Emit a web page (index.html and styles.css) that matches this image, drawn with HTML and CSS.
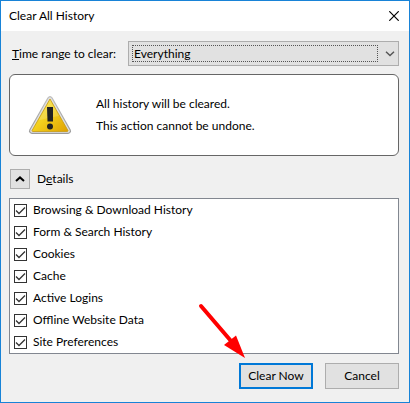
FILE: index.html
```html
<!DOCTYPE html>
<html lang="en">
  <head>
    <meta charset="UTF-8" />
    <meta name="viewport" content="width=device-width, initial-scale=1.0" />
    <title>Clear All History</title>
    <link rel="stylesheet" href="styles.css">
  </head>

  <body>
    <div class="dialog">
      <header class="titlebar">
        <h1>Clear All History</h1>
        <button type="button" class="close" aria-label="Close">
          <svg width="10" height="10" viewBox="0 0 10 10">
            <path d="M0.3 0.3L9.7 9.7M9.7 0.3L0.3 9.7" stroke="#000" stroke-width="1.2" />
          </svg>
        </button>
      </header>

      <main>
        <div class="range">
          <label for="range"><u>T</u>ime range to clear:</label>
          <div class="dropdown">
            <select id="range">
              <option>Everything</option>
            </select>
            <svg class="chevron" width="10" height="6" viewBox="0 0 10 6">
              <path d="M1 0.8L5 4.6L9 0.8" fill="none" stroke="#555" stroke-width="1.4" />
            </svg>
          </div>
        </div>

        <section class="warning">
          <svg class="warning-icon" width="44" height="40" viewBox="0 0 44 40">
            <defs>
              <linearGradient id="yellow" x1="0" y1="0" x2="1" y2="1">
                <stop offset="0" stop-color="#fbe94a" />
                <stop offset="0.5" stop-color="#f3cf1c" />
                <stop offset="1" stop-color="#dfa000" />
              </linearGradient>
              <linearGradient id="rim" x1="0" y1="0" x2="0" y2="1">
                <stop offset="0" stop-color="#bcbcbc" />
                <stop offset="1" stop-color="#9a9a9a" />
              </linearGradient>
            </defs>
            <path d="M19.4 2.8Q22 -0.6 24.6 2.8L42.6 34.5Q44 38.4 40.2 39H3.8Q0 38.4 1.4 34.5Z" fill="url(#rim)" />
            <path d="M20.2 3.5Q22 1 23.8 3.5L41.6 34.9Q42.4 37.2 40 37.8H4Q1.6 37.2 2.4 34.9Z" fill="#e0e0e0" />
            <path d="M22 4L40 35.6Q40 36.5 39.2 36.5H4.8Q4 36.5 4 35.6Z" fill="url(#yellow)" stroke="#c79a12" stroke-width="0.8" stroke-linejoin="round" />
            <path d="M22 5L31 21Q21 22 10.5 25.5Z" fill="#fff" opacity="0.16" />
            <path d="M19 12H25V26.500H19.500Z" fill="#222" />
            <circle cx="22" cy="31.500" r="3" fill="#222" />
          </svg>
          <div class="warning-text">
            <p>All history will be cleared.</p>
            <p>This action cannot be undone.</p>
          </div>
        </section>

        <div class="details">
          <button type="button" id="details" class="toggle" aria-expanded="true">
            <svg width="10" height="6" viewBox="0 0 10 6">
              <path d="M1 5L5 1.4L9 5" fill="none" stroke="#000" stroke-width="2" />
            </svg>
          </button>
          <label for="details">D<u>e</u>tails</label>
        </div>

        <ul class="items">
          <li><label><input type="checkbox" checked /> Browsing &amp; Download History</label></li>
          <li><label><input type="checkbox" checked /> Form &amp; Search History</label></li>
          <li><label><input type="checkbox" checked /> Cookies</label></li>
          <li><label><input type="checkbox" checked /> Cache</label></li>
          <li><label><input type="checkbox" checked /> Active Logins</label></li>
          <li><label><input type="checkbox" checked /> Offline Website Data</label></li>
          <li><label><input type="checkbox" checked /> Site Preferences</label></li>
        </ul>

        <footer class="actions">
          <div class="pointed">
            <button type="button" class="btn primary">Clear Now</button>
            <svg class="arrow" width="52" height="60" viewBox="0 0 52 60">
              <path d="M5 6L35 41" stroke="#f00" stroke-width="4" stroke-linecap="round" />
              <path d="M49 58L28 45L40 35.5Z" fill="#f00" />
            </svg>
          </div>
          <button type="button" class="btn">Cancel</button>
        </footer>
      </main>
    </div>
  </body>
</html>
```

FILE: styles.css
```css
* {
  box-sizing: border-box;
}

body {
  margin: 0;
  font-family: Lato, "Open Sans", sans-serif;
  font-size: 12px;
  line-height: 22px;
  color: #000;
  background-color: #f0f0f0;
}

button,
select {
  font: inherit;
  color: inherit;
}

.dialog {
  min-height: 100vh;
  border: 1px solid #1883d7;
}

.titlebar {
  display: flex;
  align-items: center;
  justify-content: space-between;
  height: 30px;
  padding: 0 10px 0 8px;
  background-color: white;
}

.titlebar h1 {
  margin: 0;
  font-size: 12px;
  font-weight: normal;
}

.close {
  display: flex;
  padding: 0;
  border: none;
  background: none;
}

main {
  padding: 10px 10px 13px 8px;
}

.range {
  display: flex;
  align-items: center;
  gap: 12px;
  padding-left: 3px;
}

.dropdown {
  position: relative;
  flex: 1;
  display: flex;
  height: 25px;
  padding: 3px 20px 3px 3px;
  border: 1px solid #adadad;
  background-color: #e1e1e1;
}

.dropdown select {
  appearance: none;
  width: 100%;
  padding: 0 1px;
  border: 1px dotted #555;
  border-radius: 0;
  line-height: 15px;
  background: none;
}

.chevron {
  position: absolute;
  right: 3px;
  top: 9px;
  pointer-events: none;
}

.warning {
  display: flex;
  align-items: center;
  gap: 24px;
  height: 82px;
  margin-top: 8px;
  padding: 0 18px;
  border: 1px solid #666;
  border-radius: 6px;
  background-color: white;
}

.warning p {
  margin: 0;
}

.details {
  display: flex;
  align-items: center;
  gap: 7px;
  margin: 12px 0 8px 1px;
}

.toggle {
  display: flex;
  align-items: center;
  justify-content: center;
  width: 20px;
  height: 20px;
  padding: 0;
  border: 1px solid #adadad;
  background-color: #e1e1e1;
}

.items {
  margin: 0;
  padding: 0 4px;
  list-style: none;
  border: 1px solid #828790;
  background-color: white;
}

.items label {
  display: flex;
  align-items: center;
  gap: 6px;
}

.items input {
  appearance: none;
  width: 13px;
  height: 13px;
  margin: 0;
  border: 1px solid #333;
  background: white url("data:image/svg+xml,%3Csvg xmlns='http://www.w3.org/2000/svg' viewBox='0 0 11 11'%3E%3Cpath d='M1 5.5L4 8.5L10 2.5' fill='none' stroke='%23333' stroke-width='1.3'/%3E%3C/svg%3E") center / 11px 11px no-repeat;
}

.actions {
  display: flex;
  justify-content: flex-end;
  gap: 12px;
  margin-top: 9px;
}

.pointed {
  position: relative;
}

.btn {
  display: block;
  width: 74px;
  height: 26px;
  padding: 0;
  border: 1px solid #adadad;
  line-height: 22px;
  background-color: #e1e1e1;
}

.primary {
  border: 2px solid #0078d7;
}

.arrow {
  position: absolute;
  left: -43px;
  bottom: 29px;
  pointer-events: none;
}
```
